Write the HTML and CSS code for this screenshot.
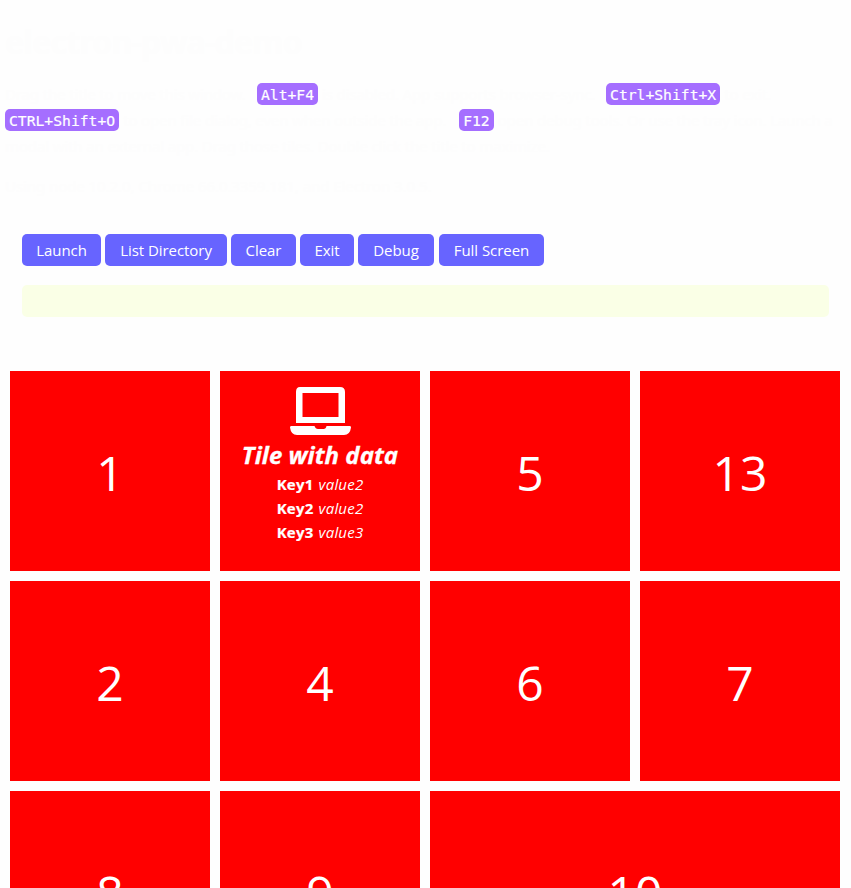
FILE: index.html
```html
<!DOCTYPE html>
<html lang="en">
<head>
<meta charset="utf-8">
<title>electron-pwa-demo</title>
<link rel="stylesheet" href="styles.css">
</head>
<body>
<header class="intro">
<h1>electron-pwa-demo</h1>
<p><span class="run run-a">Drag the title to move this window.</span><kbd>Alt+F4</kbd><span class="run run-b">is disabled. App supports browser-sync.</span><kbd>Ctrl+Shift+X</kbd><span class="run">to exit.</span></p>
<p><kbd>CTRL+Shift+O</kbd><span class="run run-c">to open file dialog, even when outside the app.</span><kbd>F12</kbd><span class="run">open debug tools. Or use the tray icon. Launch a</span></p>
<p><span class="run">modal with an external app. Drag those tiles. Double click the title to maximize.</span></p>
<p class="versions">Using node 10.2.0, Chrome 66.0.3359.181, and Electron 3.0.5.</p>
</header>
<main>
<section class="controls">
<div class="buttons">
<button class="b-launch">Launch</button>
<button class="b-list">List Directory</button>
<button class="b-clear">Clear</button>
<button class="b-exit">Exit</button>
<button class="b-debug">Debug</button>
<button class="b-full">Full Screen</button>
</div>
<div class="output"></div>
</section>
<section class="tiles">
<div class="tile">1</div>
<div class="tile data">
<svg viewBox="0 0 61 48" width="61" height="48"><path fill="#fff" fill-rule="evenodd" d="M10 0H50Q55 0 55 5V36H6V5Q6 0 10 0ZM12.500 6V30H48.500V6Z"/><path fill="#fff" d="M1 39H24.500Q25.500 42 28 42H33.500Q36 42 36.500 39H60Q61 39 61 40.500Q60 48 54 48H7Q1 48 0 40.500Q0 39 1 39Z"/></svg>
<h2>Tile with data</h2>
<dl>
<div><dt>Key1</dt><dd>value2</dd></div>
<div><dt>Key2</dt><dd>value2</dd></div>
<div><dt>Key3</dt><dd>value3</dd></div>
</dl>
</div>
<div class="tile">5</div>
<div class="tile">13</div>
<div class="tile">2</div>
<div class="tile">4</div>
<div class="tile">6</div>
<div class="tile">7</div>
<div class="tile">8</div>
<div class="tile">9</div>
<div class="tile wide">10</div>
</section>
</main>
</body>
</html>
```
FILE: styles.css
```css
* { box-sizing: border-box; }
body {
  margin: 0;
  height: 888px;
  overflow: hidden;
  background: #fefefe;
  color: #fdfdfd;
  font: 16px/26px "Noto Sans", "Open Sans", sans-serif;
}
.intro { height: 234px; padding: 24px 5px 0; }
h1 { margin: 0 0 21px; font-size: 32px; line-height: 36px; letter-spacing: -.75px; }
p { display: flex; align-items: center; height: 26px; margin: 0; white-space: nowrap; font-size: 15px; letter-spacing: -.14px; }
.run { padding-left: 4px; }
.run:first-child { padding-left: 0; }
.run-a { width: 252px; }
.run-b { width: 288px; }
.run-c { width: 340px; }
.versions { margin-top: 14px; letter-spacing: -.07px; }
kbd {
  height: 22px;
  padding: 0 4px;
  border-radius: 5px;
  background: #a56eff;
  color: #fff;
  font: 14.7px/23px "DejaVu Sans Mono", monospace;
  letter-spacing: 0;
  -webkit-text-stroke: .2px #fff;
}
.controls { padding: 0 22px; }
.buttons { display: flex; gap: 4px; }
button {
  height: 32px;
  padding: 0;
  border: 0;
  border-radius: 5px;
  background: #6764ff;
  color: #fff;
  font: 15px/32px "Open Sans", sans-serif;
  letter-spacing: -.05px;
}
.b-launch { width: 79px; }
.b-list { width: 122px; }
.b-clear { width: 65px; }
.b-exit { width: 54px; }
.b-debug { width: 76px; margin-right: 1px; }
.b-full { width: 105px; }
.output { height: 32px; margin-top: 19px; border-radius: 5px; background: #faffe6; }
.tiles {
  display: grid;
  grid-template-columns: repeat(4, 200px);
  grid-auto-rows: 200px;
  gap: 10px;
  margin: 54px 0 0 10px;
}
.tile {
  overflow: hidden;
  background: #f00;
  color: #fff;
  text-align: center;
  font: 48px/204px "Open Sans", sans-serif;
}
.wide { grid-column: span 2; }
.data { display: flex; flex-direction: column; align-items: center; padding-top: 16px; line-height: 24px; }
.data svg { flex: none; }
h2 { margin: 4px 0 1px; font: italic 700 24px/32px "Open Sans", sans-serif; letter-spacing: .03px; -webkit-text-stroke: .3px #fff; white-space: nowrap; }
dl { margin: 0; font-size: 15px; line-height: 24px; }
dl div { display: flex; gap: 5px; }
dt { font-weight: 700; letter-spacing: .25px; -webkit-text-stroke: .2px #fff; }
dd { margin: 0; font-style: italic; letter-spacing: .2px; }
```
